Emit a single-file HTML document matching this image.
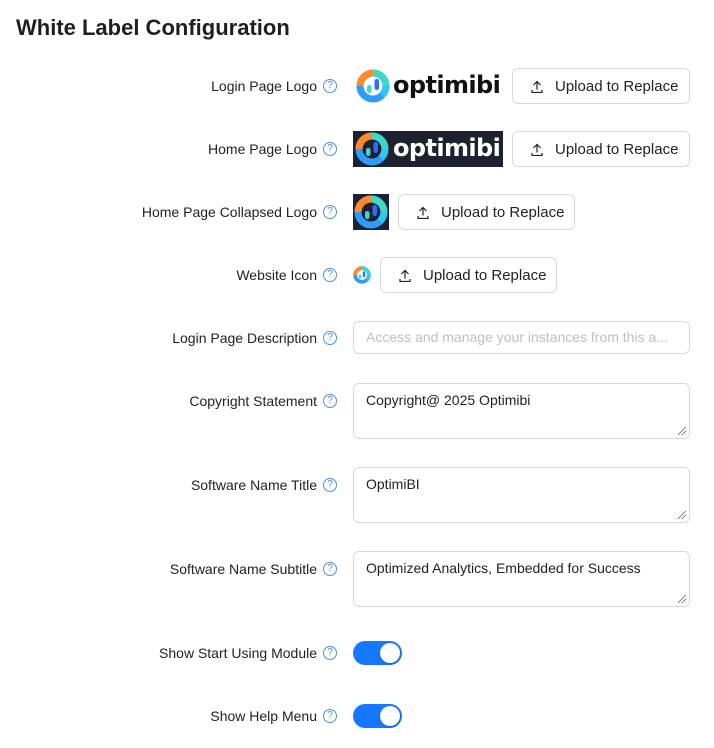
<!DOCTYPE html>
<html><head><meta charset="utf-8"><style>
body{margin:0;width:714px;height:748px;background:#fff;font-family:"Liberation Sans",sans-serif;color:rgba(0,0,0,.88);position:relative;overflow:hidden}
.a{position:absolute}
h1{position:absolute;left:16px;top:15px;margin:0;font-size:22px;font-weight:600;color:#1f1f1f}
.l{position:absolute;right:397px;font-size:14px;text-align:right;white-space:nowrap;color:#222}
.q{position:absolute;left:323px;width:12px;height:12px;border:1px solid #4a90e2;border-radius:50%;font-size:10px;line-height:12px;text-align:center;color:#4a90e2}
.btn{position:absolute;height:34px;border:1px solid #d9d9d9;border-radius:6px;background:#fff;font-size:15px;line-height:34px;box-sizing:content-box;color:#222}
.btn svg{position:absolute;left:18px;top:11px}
.btn span{position:absolute;left:42px;top:1px}
.ta{position:absolute;left:353px;width:335px;height:55px;border:1px solid #d9d9d9;border-radius:6px;font-size:14px;padding:8px 12px;box-sizing:border-box;color:#222}
.ta:after{content:"";position:absolute;right:3px;bottom:3px;width:8px;height:8px;background:linear-gradient(135deg,transparent 45%,#555 45%,#555 52%,transparent 52%,transparent 70%,#555 70%,#555 77%,transparent 77%)}
.tg{position:absolute;left:353px;width:49px;height:24px;border-radius:12px;background:#1677ff}
.tg:after{content:"";position:absolute;right:2px;top:2px;width:20px;height:20px;border-radius:50%;background:#fff;box-shadow:0 1px 2px rgba(0,0,0,.2)}
.logo{font-weight:bold;font-family:"DejaVu Sans",sans-serif;letter-spacing:-0.6px;font-size:24px}
</style></head><body>
<svg width="0" height="0" style="position:absolute"><defs>
<g id="c"><circle cx="17" cy="17" r="13" fill="none" stroke="#2f9bff" stroke-width="7"/>
<path d="M4 17 A13 13 0 0 1 17 4" fill="none" stroke="#ff8a2a" stroke-width="7"/>
<path d="M17 4 A13 13 0 0 1 30 17" fill="none" stroke="#3fd8c8" stroke-width="7"/>
<path d="M26 26 A13 13 0 0 0 30 17" fill="none" stroke="#2fc8f0" stroke-width="7"/>
<rect x="11" y="16" width="4.5" height="8" rx="2.2" fill="#3fd8c8"/><rect x="18.5" y="10" width="4.5" height="11" rx="2.2" fill="#2f6bff"/></g>
<g id="u"><path d="M6 1.5v8M2.5 5l3.5-3.5 3.5 3.5M1 10v2.5h10v-2.5" fill="none" stroke="#222" stroke-width="1.2"/></g>
</defs></svg>
<h1>White Label Configuration</h1>

<div class="l" style="top:78px">Login Page Logo</div><div class="q" style="top:79px">?</div>
<svg class="a" style="left:356px;top:69px" width="34" height="34"><use href="#c"/></svg>
<div class="a logo" style="left:393px;top:71px;color:#111">optimibi</div>
<div class="btn" style="left:512px;top:68px;width:176px"><svg width="12" height="13"><use href="#u"/></svg><span>Upload to Replace</span></div>

<div class="l" style="top:141px">Home Page Logo</div><div class="q" style="top:142px">?</div>
<div class="a" style="left:353px;top:131px;width:150px;height:36px;background:#1e2230"></div>
<svg class="a" style="left:355px;top:132px" width="34" height="34"><use href="#c"/></svg>
<div class="a logo" style="left:393px;top:134px;color:#fff">optimibi</div>
<div class="btn" style="left:512px;top:131px;width:176px"><svg width="12" height="13"><use href="#u"/></svg><span>Upload to Replace</span></div>

<div class="l" style="top:204px">Home Page Collapsed Logo</div><div class="q" style="top:205px">?</div>
<div class="a" style="left:353px;top:194px;width:36px;height:36px;background:#1e2230"></div>
<svg class="a" style="left:354px;top:195px" width="34" height="34"><use href="#c"/></svg>
<div class="btn" style="left:398px;top:194px;width:175px"><svg width="12" height="13"><use href="#u"/></svg><span>Upload to Replace</span></div>

<div class="l" style="top:267px">Website Icon</div><div class="q" style="top:268px">?</div>
<svg class="a" style="left:353px;top:266px" width="18" height="18" viewBox="0 0 34 34"><use href="#c"/></svg>
<div class="btn" style="left:380px;top:257px;width:175px"><svg width="12" height="13"><use href="#u"/></svg><span>Upload to Replace</span></div>

<div class="l" style="top:330px">Login Page Description</div><div class="q" style="top:331px">?</div>
<div class="a" style="left:353px;top:321px;height:31px;border:1px solid #d9d9d9;border-radius:6px;font-size:14px;line-height:31px;padding-left:12px;box-sizing:content-box;width:323px;color:#bfbfbf;white-space:nowrap;overflow:hidden">Access and manage your instances from this a...</div>

<div class="l" style="top:393px">Copyright Statement</div><div class="q" style="top:394px">?</div>
<div class="ta" style="top:383px;width:337px;height:56px">Copyright@ 2025 Optimibi</div>

<div class="l" style="top:477px">Software Name Title</div><div class="q" style="top:478px">?</div>
<div class="ta" style="top:467px;width:337px;height:56px">OptimiBI</div>

<div class="l" style="top:561px">Software Name Subtitle</div><div class="q" style="top:562px">?</div>
<div class="ta" style="top:551px;width:337px;height:56px">Optimized Analytics, Embedded for Success</div>

<div class="l" style="top:645px">Show Start Using Module</div><div class="q" style="top:646px">?</div>
<div class="tg" style="top:641px"></div>

<div class="l" style="top:708px">Show Help Menu</div><div class="q" style="top:709px">?</div>
<div class="tg" style="top:704px"></div>
</body></html>
